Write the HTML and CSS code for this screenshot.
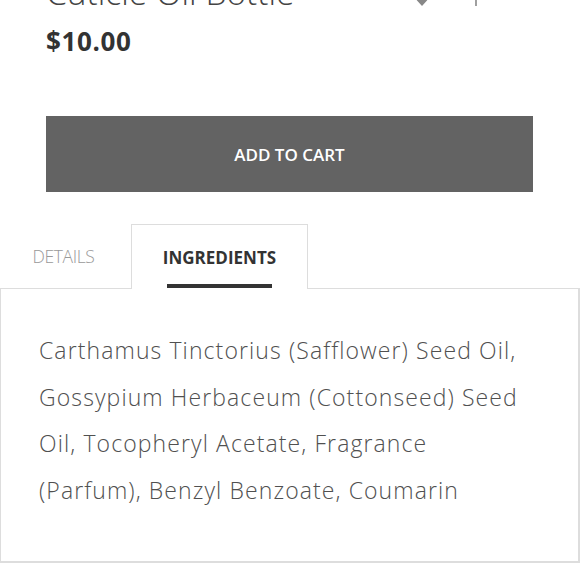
FILE: index.html
```html
<!DOCTYPE html>
<html lang="en">
<head>
<meta charset="utf-8">
<title>Cuticle Oil Bottle</title>
<link rel="stylesheet" href="styles.css">
</head>
<body>
<main class="page">
  <section class="product">
    <div class="title-row">
      <h1 class="title">Cuticle Oil Bottle</h1>
      <div class="actions">
        <svg class="icon" width="14" height="14" viewBox="0 0 14 14"><path d="M7 12 L2 6.5 A3 3 0 0 1 7 3 A3 3 0 0 1 12 6.5 Z" fill="#888"/></svg>
        <svg class="icon" width="14" height="14" viewBox="0 0 14 14"><path d="M7 1 V12" stroke="#888" stroke-width="1.6"/></svg>
      </div>
    </div>
    <div class="price">$10.00</div>
    <button class="cart-btn" type="button">ADD TO CART</button>
  </section>
  <section class="tabs">
    <div class="tab-list">
      <div class="tab">DETAILS</div>
      <div class="tab tab-active"><span class="tab-label">INGREDIENTS</span></div>
    </div>
    <div class="panel">
      <p class="ingredients">Carthamus Tinctorius (Safflower) Seed Oil,<br>Gossypium Herbaceum (Cottonseed) Seed<br>Oil, Tocopheryl Acetate, Fragrance<br>(Parfum), Benzyl Benzoate, Coumarin</p>
    </div>
  </section>
</main>
</body>
</html>
```

FILE: styles.css
```css
* { box-sizing: border-box; }
html, body { margin: 0; padding: 0; background: #fff; }
body { font-family: "Open Sans", "Liberation Sans", sans-serif; color: #333; overflow: hidden; }

.page { width: 580px; }

.product { padding: 0 47px 0 46px; }

.title-row {
  display: flex;
  align-items: flex-start;
  justify-content: space-between;
  height: 31px;
  margin-top: -23px;
}
.title {
  margin: 0;
  font-size: 33.5px;
  font-weight: 300;
  line-height: 31px;
  color: #444;
  white-space: nowrap;
}
.actions { display: flex; gap: 40px; margin-right: 50px; align-items: flex-end; height: 31px; }
.icon { display: block; }

.price {
  margin-top: 15px;
  font-size: 26px;
  font-weight: 700;
  line-height: 36px;
  color: #333;
  letter-spacing: 0.6px;
}

.cart-btn {
  display: block;
  width: 100%;
  height: 76px;
  margin-top: 57px;
  border: 0;
  background: #636363;
  color: #fff;
  font-family: "Open Sans", sans-serif;
  font-weight: 600;
  font-size: 17px;
  letter-spacing: 0;
  cursor: pointer;
}

.tabs { margin-top: 32px; }
.tab-list { display: flex; align-items: flex-end; }
.tab {
  height: 64px;
  display: flex;
  align-items: center;
  justify-content: center;
  font-size: 17px;
  font-weight: 300;
  color: #999;
}
.tab:first-child { width: 131px; padding-right: 4px; font-size: 17.5px; letter-spacing: -0.4px; }
.tab-active {
  width: 177px;
  border: 1px solid #ddd;
  border-bottom: 0;
  background: #fff;
  margin-bottom: -1px;
  position: relative;
  z-index: 1;
  color: #333;
  font-weight: 700;
  height: 65px;
}
.tab-label { position: relative; }
.tab-label::after {
  content: "";
  position: absolute;
  left: 4px;
  right: 4px;
  top: 100%;
  margin-top: 15px;
  height: 4px;
  background: #333;
}

.panel {
  border: 1px solid #ddd;
  border-width: 1px 2px 2px 1px;
  height: 275px;
  padding: 38px 20px 0 38px;
}
.ingredients {
  margin: 0;
  font-size: 23px;
  line-height: 46.5px;
  font-weight: 300;
  letter-spacing: 1.1px;
  color: #505050;
  white-space: nowrap;
}
```
